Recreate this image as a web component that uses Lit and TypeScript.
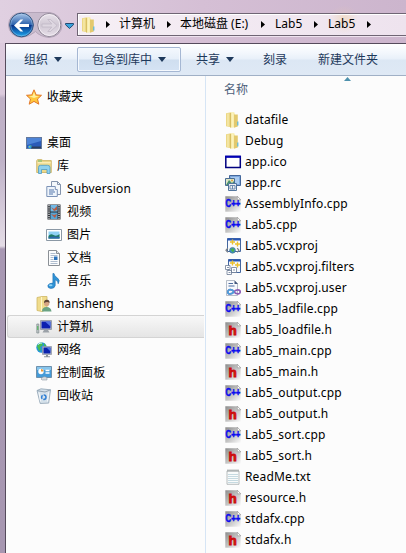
import { LitElement, html, svg, css } from "lit";
import { customElement, property } from "lit/decorators.js";

const folder = svg`
  <path d="M1 1.200 6 .2v15l-5-1z" fill="#ecd784"/>
  <path d="M5.500.200h3.800l.5 2v13l-4.300.6z" fill="#f8ecaa"/>
  <path d="M9 2.500h3.800v12l-3.800 1.200z" fill="#e3c96e"/>
  <path d="M5.500 1v14.500" stroke="#cdb04f" stroke-width=".7"/>
  <path d="M3 1.500v12.500M7.700 1v14" stroke="#fdf5c6" stroke-width=".9"/>
  <path d="M12.800 9.500v4" stroke="#58b8dc" stroke-width="1.200"/>`;

const page = svg`
  <defs><linearGradient id="pg" x1="0" y1="0" x2="1" y2="1">
  <stop offset="0" stop-color="#8c8c8c"/><stop offset=".45" stop-color="#bdbdbd"/><stop offset="1" stop-color="#fafafa"/></linearGradient></defs>
  <path d="M.300.300h12.200l3.200 3.200v12.200H.300z" fill="url(#pg)"/>
  <path d="M12.300.200v3.600h3.500z" fill="#fff" stroke="#8d8d8d" stroke-width=".6"/>`;

const icons: Record<string, unknown> = {
  folder,
  star: svg`<path d="M8 .8 10.200 5.900 15.500 6.300 11.500 10 12.800 15.200 8 12.400 3.200 15.200 4.500 10 .5 6.300 5.800 5.900z" fill="#ffc83c" stroke="#e2782a" stroke-width="1" stroke-linejoin="round"/>
    <path d="M8 3 9.400 6.900 13 7.200 8 9 3 7.200 6.600 6.900z" fill="#fff0a0"/>`,
  desktop: svg`<rect x=".5" y="2.500" width="15" height="11" fill="#2b5bb8" stroke="#63789c"/>
    <path d="M1 3h14v3L1 10z" fill="#5b91e2" opacity=".75"/><path d="M5 11.500h10v2H5z" fill="#2d3f5c"/>
    <circle cx="3.800" cy="12" r="1.800" fill="#2aa0e8"/><path d="M2.500 11.300h1.300v1.500z" fill="#f4d441"/><path d="M4 10.500h1.400v1.300z" fill="#7bc94a"/>`,
  library: svg`<path d="M.7 14.500v-12l1-.9h4l1.200 1h8.400v11.900z" fill="#edd98b" stroke="#c8ae5d" stroke-width=".8"/>
    <path d="M1.500 4.800h13.200" stroke="#fff6c9"/><path d="M2 3h4" stroke="#69b46b"/>
    <path d="M2.500 15.500V9.300q0-2 2-2h7q2.500 0 2.500 2v6.200h-3v-4H5.500v4z" fill="#8fd1ee" stroke="#4f9cc4" stroke-width=".8"/>`,
  docs: svg`<path d="M5.500.500h6l3 3v10h-9z" fill="#f3f7fb" stroke="#8494ad"/><path d="M11.500.500v3h3" fill="none" stroke="#8494ad"/>
    <path d="M.8 5.500h8.500v3h2v7H.8z" fill="#eef4fb" stroke="#7d93b7"/><path d="M3 9h5M3 11h6M3 13h4" stroke="#5577ab"/>`,
  video: svg`<path d="M1.500.500h13v15h-13z" fill="#2b2f36"/><path d="M4.500 1h7v6.500h-7z" fill="#71b9e6"/><path d="M4.500 8.500h7V15h-7z" fill="#57a5d5"/>
    <path d="M5 3l3 2 3-3v4l-3 1zM5 10l3 1 3-1-2 4z" fill="#b75b43"/>
    <path d="M3 1v14M13 1v14" stroke="#f5f5f5" stroke-width="1.200" stroke-dasharray="1.200 1"/>`,
  picture: svg`<path d="M.5 2.500h15v11H.5z" fill="#fff" stroke="#8b98a5"/><path d="M2.500 4.500h11v7h-11z" fill="#8ed1f4"/>
    <path d="M2.500 9q2-3 5-1t6-1v4.500h-11z" fill="#207a65"/><path d="M2.500 10.500q5-2 11-.4v1.400h-11z" fill="#2c69ad"/>`,
  text: svg`<path d="M2.500.500h8l3 3v12h-11z" fill="#fbfcfd" stroke="#8b9096"/><path d="M10.500.500v3h3" fill="#e2e6eb" stroke="#8b9096"/>
    <path d="M4.500 3.500h5M4.500 5.500h7M4.500 7.500h3M4.500 9.500h3M4.500 11.500h7M4.500 13.500h7" stroke="#9aabc2" stroke-width=".8"/><path d="M8 6.500h3.500v3.500H8z" fill="#2b72bb"/>`,
  music: svg`<path d="M8 .5q.4 3 3.500 4.500 3 2.300.7 5.800 0-3-3-4v5.800q-.6 3-4.500 2.900-3.300-.4-2.800-2.900.8-2.600 5-2.500V.5z" fill="#2f93d6" stroke="#1e6db0" stroke-width=".6"/><ellipse cx="4.700" cy="12.300" rx="1.800" ry="1" fill="#91d4f6"/>`,
  user: svg`<path d="M1 1.500 6 .5h5v13l-5 2-5-1z" fill="#f0dc8d" stroke="#cfb765" stroke-width=".8"/><path d="M5.500 1v14" stroke="#fff6c8"/>
    <path d="M6 15.500q0-4.500 4.500-4.500t5 4.500z" fill="#6aa384"/><circle cx="10.700" cy="7.500" r="2.700" fill="#d7a684"/><path d="M8 7q0-3.500 3-3.300T13.500 7q-2-2-5.500 0z" fill="#5d4436"/>`,
  computer: svg`<path d="M.8 5h2v9h-2z" fill="#c3c9cb" stroke="#7c8a8b" stroke-width=".7"/><path d="M1.800 7v4" stroke="#45b552"/>
    <path d="M4.500 1.500h11v9h-11z" fill="#c3c7cf" stroke="#999fab"/><path d="M5.500 2.500h9v7h-9z" fill="#0b20b0"/><path d="M9 2.500h5.500v5z" fill="#5273e4"/>
    <path d="M8 11h4l1.500 2.500h-7z" fill="#9ba1a8"/>`,
  network: svg`<circle cx="5.500" cy="5.500" r="5.200" fill="#2594db"/><path d="M1 4Q3 0 6 .6L7 3 4 5l1 3-2 1zM8 1l2.500 3H8z" fill="#48bd51"/>
    <path d="M2 2.500Q4 .5 6 1" stroke="#d0f4ff" fill="none"/>
    <path d="M6.500 4.500h9v8h-9z" fill="#c1c5ce" stroke="#8a91a0" stroke-width=".7"/><path d="M7.500 5.500h7v6h-7z" fill="#0b23ae"/><path d="M10.500 5.500h4v4z" fill="#4d74e4"/><path d="M10 13h2v1.200h2v1H8v-1h2z" fill="#8c949c"/>`,
  control: svg`<path d="M.5 1.500h15v11H.5z" fill="#459bd8" stroke="#6e91ad"/><path d="M1 2h14v3H1z" fill="#87c5ec"/>
    <circle cx="5" cy="6.500" r="2.700" fill="#fff"/><path d="M5 6.500V4a2.500 2.500 0 0 1 2.500 2.500z" fill="#ee9a38"/>
    <path d="M9.500 5.500h4M9.500 8h4" stroke="#fff" stroke-width="1.300"/><path d="M5 14q3-4 6-1v2H6z" fill="#d8dce0" stroke="#909aa4" stroke-width=".6"/>`,
  bin: svg`<path d="M1 2.500 5 .8l9.500 1-1.800 13.300-8.500.4z" fill="#d5e1ea" stroke="#8fa2b2" stroke-width=".8"/><path d="M1.200 2.700 9 4l5.500-2.200" fill="none" stroke="#8fa2b2"/>
    <path d="M3 4.500l1.500 9M12.500 4.500l-1 9" stroke="#fff" stroke-width=".8"/><circle cx="7.800" cy="9.200" r="2.200" fill="none" stroke="#2f7fd4" stroke-width="1.500" stroke-dasharray="3.600 1"/>`,
  ico: svg`<path d="M.8 2.500h14.500v11H.8z" fill="#fff" stroke="#000080" stroke-width="1.500"/><path d="M.2 1.700h15.600v2.100H.2z" fill="#0000b4"/>`,
  rc: svg`<path d="M4.500.500h11v10h-11z" fill="#7fa9de" stroke="#45689c"/><path d="M6 2h8v7H6z" fill="#a9cbf0"/>
    <path d="M.5 3.500h9v7h-9z" fill="#e0e6c8" stroke="#4a6d93"/><path d="M1 10l3-5 3 3 2-2v4z" fill="#48906d"/><circle cx="7" cy="5.500" r="1" fill="#e0a53c"/>
    <path d="M3.500 8.500h8v7h-8z" fill="#eef0f3" stroke="#53769d"/><path d="M5 10.500h5v3.500H5z" fill="none" stroke="#6c8bb0"/><path d="M7.500 10.500V14" stroke="#6c8bb0"/>`,
  cpp: svg`${page}<text x=".5" y="10.500" font-family="Liberation Sans" font-weight="700" font-size="10" textLength="14.800" lengthAdjust="spacingAndGlyphs" fill="#0b0bf0" stroke="#0b0bf0" stroke-width=".5">C++</text>`,
  h: svg`${page}<text x="3.600" y="12.800" font-family="Liberation Sans" font-weight="700" font-size="13.500" fill="#da1212" stroke="#c80c0c" stroke-width=".9">h</text>`,
  proj: svg`<path d="M2.500.500h13v13h-13z" fill="#f8fafd" stroke="#44679f"/><path d="M2.500.500h13v2h-13z" fill="#2856b5"/>
    <path d="M7.500 1.500v5M5 4h5M12.500 3.500v5M10 6h5" stroke="#ecc02c" stroke-width="1.400"/>
    <circle cx="7.500" cy="12.300" r="2.900" fill="#3f8fcf" stroke="#3d6c7c" stroke-width=".6"/><path d="M5.500 11.500l2.500-1.500 1.500 2-1.500 2.500-1-1z" fill="#4cb049"/>
    <path d="M2.800 10.200 1 12.300l1.800 2M12.200 10.200l1.800 2.100-1.800 2" fill="none" stroke="#7b8086" stroke-width="1.200"/>`,
  filters: svg`<path d="M3.500.500h12v13h-12z" fill="#f5f8fd" stroke="#44679f"/><path d="M3.500.500h12v2h-12z" fill="#2856b5"/>
    <path d="M7.500 1.500v5M5 4h5M12.500 3.500v5M10 6h5" stroke="#ecc02c" stroke-width="1.400"/>
    <path d="M.5 6.500h4.500v4H.5zM6.500 8.500h5v5h-5zM2 11.500h4.500v4H2z" fill="#fff" stroke="#6c7b94" stroke-width=".8"/><path d="M2 8.500h2M8 11h2M3.500 13.500h2" stroke="#8795ac"/>`,
  vsuser: svg`<path d="M1.500.500h8l3 3v12h-11z" fill="#f7f9fc" stroke="#a5adba" stroke-width=".8"/><path d="M9.500.500v3.500h3.500z" fill="#41567c"/>
    <path d="M3.500 3.500h4.500M3.500 6h6" stroke="#4e6da0" stroke-width="1"/>
    <path d="M9 11.800C7.500 9.500 3 8.500 2.800 11.800s4.700 2.300 6.200 0 6-3 6.200 0-4.700 2.300-6.200 0z" fill="none" stroke="#8b5cb4" stroke-width="1.700"/><path d="M9 11.800C7.500 9.500 3 8.500 2.800 11.800s4.700 2.300 6.200 0" fill="none" stroke="#4a9fda" stroke-width="1.700"/>`,
  note: svg`<path d="M2 2h12v13.300H2z" fill="#f9fbfb" stroke="#a7adae" stroke-width=".8"/><path d="M3 5.500h10M3 7.500h10M3 9.500h10M3 11.500h10M3 13.500h10" stroke="#b9d2da" stroke-width=".8"/>
    <path d="M2.500 1.500h11" stroke="#858b8c" stroke-width="2" stroke-dasharray="1 1"/>`,
};

@customElement("file-icon")
class FileIcon extends LitElement {
  @property() name = "";
  static styles = css`
    :host { display: block; width: 16px; height: 16px; flex: none; }
    svg { display: block; overflow: visible; }
  `;
  render() {
    return html`<svg width="16" height="16" viewBox="0 0 16 16">${icons[this.name]}</svg>`;
  }
}

const tree: [string, string, number][] = [
  ["desktop", "桌面", 0], ["library", "库", 1], ["docs", "Subversion", 2], ["video", "视频", 2],
  ["picture", "图片", 2], ["text", "文档", 2], ["music", "音乐", 2], ["user", "hansheng", 1],
  ["computer", "计算机", 1], ["network", "网络", 1], ["control", "控制面板", 1], ["bin", "回收站", 1],
];
const files: [string, string][] = [
  ["folder", "datafile"], ["folder", "Debug"], ["ico", "app.ico"], ["rc", "app.rc"],
  ["cpp", "AssemblyInfo.cpp"], ["cpp", "Lab5.cpp"], ["proj", "Lab5.vcxproj"],
  ["filters", "Lab5.vcxproj.filters"], ["vsuser", "Lab5.vcxproj.user"], ["cpp", "Lab5_ladfile.cpp"],
  ["h", "Lab5_loadfile.h"], ["cpp", "Lab5_main.cpp"], ["h", "Lab5_main.h"], ["cpp", "Lab5_output.cpp"],
  ["h", "Lab5_output.h"], ["cpp", "Lab5_sort.cpp"], ["h", "Lab5_sort.h"], ["note", "ReadMe.txt"],
  ["h", "resource.h"], ["cpp", "stdafx.cpp"], ["h", "stdafx.h"],
];

@customElement("app-root")
class AppRoot extends LitElement {
  static styles = css`
    :host {
      display: flex; flex-direction: column; width: 406px; height: 553px; overflow: hidden; box-sizing: border-box;
      font: 12px/16px "Noto Sans", "Noto Sans CJK SC", sans-serif; color: #000; white-space: nowrap;
      background: linear-gradient(#dccadd 0, #dccbdd 94px, #bfb0c6 98px, #bfb2c8 160px, #e4dce6 246px, #a898b3 249px, #a797b1 100%);
    }
    .nav { display: flex; height: 43px; flex: none;
      background: radial-gradient(ellipse 14px 12px at 344px 17px, #e8c9b055, #e8c9b000), linear-gradient(90deg, #e0d0e1, #d5bfd5 50%, #ccb5cd); }
    .buttons { width: 77px; flex: none; }
    .address { display: flex; align-items: center; box-sizing: border-box; width: 329px; height: 23px; margin-top: 13px;
      border: 1px solid #6f6574; border-right: 0; box-shadow: inset 1px 1px #fff, 0 1px #efe3ef; padding-left: 3px;
      background: radial-gradient(ellipse 14px 16px at 266px 4px, #f0dccb, #f0dccb00), linear-gradient(90deg, #f6eff5, #eee3ee); }
    .address file-icon { margin-right: 9px; }
    .crumb { display: flex; align-items: center; }
    .tri { width: 4px; height: 7px; background: #000; clip-path: polygon(0 0, 100% 50%, 0 100%); }
    .c1 { width: 61px; } .c2 { width: 94px; } .c3 { width: 53px; } .c4 { width: 53px; }
    .crumb span { margin: -1px 0 0 9px; }
    .c3 span, .c4 span { margin-left: 10px; }
    .window { flex: 1; min-height: 0; margin-left: 5px; border: solid #554b5c; border-width: 1px 0 0 1px; display: flex; flex-direction: column; background: #fcfcfc; }
    .tools { box-sizing: border-box; height: 32px; flex: none; display: flex; align-items: center; color: #1e395b;
      background: linear-gradient(#fff 0, #f1f6fc 10px, #e8f0f9 15px, #dce7f4 16px, #dfe9f5 100%); border-bottom: 1px solid #a0b0c6; }
    .tool { display: flex; align-items: center; box-sizing: border-box; height: 25px; padding-left: 18px; }
    .down { width: 8px; height: 5px; background: #1e395b; clip-path: polygon(0 0, 100% 0, 50% 100%); margin-left: 6px; }
    .t1 { width: 71px; }
    .t2 { width: 104px; padding-left: 14px; border: 1px solid #a5b7d3; border-radius: 2px;
      background: linear-gradient(#f4f8fd, #e6eff9 48%, #cfdeef 52%, #d5e3f4); box-shadow: inset 0 0 0 1px #f5f9fe; }
    .t3 { width: 65px; padding-left: 15px; } .t4 { padding-left: 17px; width: 54px; }
    .panes { display: flex; flex: 1; min-height: 0; }
    .tree { width: 200px; flex: none; box-sizing: border-box; border-right: 1px solid #d6e5f5; padding-top: 9px; letter-spacing: .05px; }
    .row { display: flex; align-items: center; box-sizing: border-box; height: 23px; gap: 5px; border: 1px solid transparent; margin: 0 1px; }
    .fav { margin-bottom: 23px; }
    .l0 { padding-left: 18px; } .l1 { padding-left: 28px; } .l2 { padding-left: 38px; }
    .l2 span { letter-spacing: .15px; }
    .on { background: linear-gradient(#f8f8f8, #e5e5e5); border: 1px solid #d4d4d4; border-right: 0; border-radius: 3px 0 0 3px; }
    .list { flex: 1; position: relative; }
    .head { box-sizing: border-box; height: 33px; padding: 6px 0 0 18px; color: #4c607a; }
    .sort { position: absolute; top: 1px; left: 138px; width: 7px; height: 4px; background: #4e91ad; clip-path: polygon(50% 0, 100% 100%, 0 100%); }
    .file { display: flex; align-items: center; height: 21px; gap: 4px; padding-left: 19px; }
    .latin { letter-spacing: .15px; }
  `;

  render() {
    return html`
      <div class="nav">
        <svg class="buttons" width="77" height="43" viewBox="0 0 77 43">
          <defs>
            <linearGradient id="b" x2="0" y2="1"><stop offset="0" stop-color="#a9c6e8"/><stop offset=".48" stop-color="#2d63ad"/><stop offset=".52" stop-color="#08348a"/><stop offset="1" stop-color="#1fa8ee"/></linearGradient>
            <linearGradient id="f" x2="0" y2="1"><stop offset="0" stop-color="#e8e2ea"/><stop offset=".5" stop-color="#d0c8d4"/><stop offset="1" stop-color="#e7dfe9"/></linearGradient>
          </defs>
          <path d="M21 12.500H50q11 2 12 13-1 11-13 12-9-1-13.500-6-5 5-14 6Q9 36 8.500 25 9 14 21 12.500z" fill="#c9bbcd" stroke="#b4a5b9"/>
          <circle cx="21.500" cy="25" r="11.800" fill="url(#b)" stroke="#31547f"/>
          <circle cx="21.500" cy="25" r="10.800" fill="none" stroke="#b6d8f5" stroke-opacity=".5" stroke-width=".8"/>
          <path d="M14 25.500l6.500-6h2.700l-4 4.500H29v3h-9.800l4 4.500h-2.700z" fill="#fff"/>
          <circle cx="49.300" cy="25" r="11.500" fill="url(#f)" stroke="#8d8494"/>
          <circle cx="49.300" cy="25" r="10.500" fill="none" stroke="#f6f1f7" stroke-width=".8"/>
          <path d="M57 25.500l-6.500-6h-2.700l4 4.500H42v3h9.800l-4 4.500h2.700z" fill="#ded7e1" stroke="#bdb4c3" stroke-width=".7"/>
          <path d="M65.500 23.500h8v1.200L69.500 28.500l-4-3.800z" fill="#39a2dc" stroke="#244b73"/>
        </svg>
        <div class="address">
          <file-icon name="folder"></file-icon>
          ${[["计算机", "c1"], ["本地磁盘 (E:)", "c2"], ["Lab5", "c3"], ["Lab5", "c4"]].map(
            ([t, c]) => html`<div class="crumb ${c}"><i class="tri"></i><span>${t}</span></div>`)}
          <i class="tri"></i>
        </div>
      </div>
      <div class="window">
        <div class="tools">
          <div class="tool t1">组织<i class="down"></i></div>
          <div class="tool t2">包含到库中<i class="down"></i></div>
          <div class="tool t3">共享<i class="down"></i></div>
          <div class="tool t4">刻录</div>
          <div class="tool">新建文件夹</div>
        </div>
        <div class="panes">
          <div class="tree">
            <div class="row l0 fav"><file-icon name="star"></file-icon>收藏夹</div>
            ${tree.map(([i, t, l]) => html`<div class="row l${l} ${i === "computer" ? "on" : ""}"><file-icon name=${i}></file-icon><span>${t}</span></div>`)}
          </div>
          <div class="list">
            <i class="sort"></i>
            <div class="head">名称</div>
            ${files.map(([i, t]) => html`<div class="file"><file-icon name=${i}></file-icon><span class="latin">${t}</span></div>`)}
          </div>
        </div>
      </div>`;
  }
}
